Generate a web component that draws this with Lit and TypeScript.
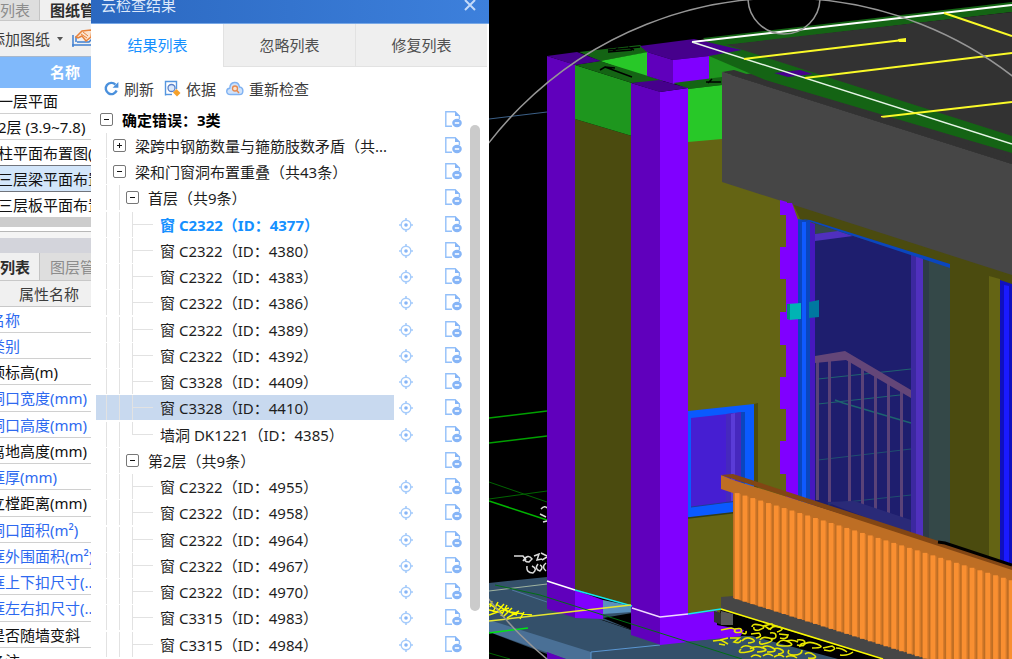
import { LitElement, html, css, svg, nothing } from "lit";
import { customElement, property, state } from "lit/decorators.js";
import { classMap } from "lit/directives/class-map.js";

interface TreeRow {
  level: number;
  text: string;
  open?: boolean;
  leaf?: boolean;
  last?: boolean;
  active?: boolean;
  selected?: boolean;
}

const win = (name: string, id: number, extra: Partial<TreeRow> = {}): TreeRow => ({
  level: 3,
  leaf: true,
  text: `${name}（ID：${id}）`,
  ...extra,
});

const ROWS: TreeRow[] = [
  { level: 0, text: "确定错误：3类", open: true },
  { level: 1, text: "梁跨中钢筋数量与箍筋肢数矛盾（共...", open: false },
  { level: 1, text: "梁和门窗洞布置重叠（共43条）", open: true },
  { level: 2, text: "首层（共9条）", open: true },
  win("窗 C2322", 4377, { active: true }),
  win("窗 C2322", 4380),
  win("窗 C2322", 4383),
  win("窗 C2322", 4386),
  win("窗 C2322", 4389),
  win("窗 C2322", 4392),
  win("窗 C3328", 4409),
  win("窗 C3328", 4410, { selected: true }),
  win("墙洞 DK1221", 4385, { last: true }),
  { level: 2, text: "第2层（共9条）", open: true },
  win("窗 C2322", 4955),
  win("窗 C2322", 4958),
  win("窗 C2322", 4964),
  win("窗 C2322", 4967),
  win("窗 C2322", 4970),
  win("窗 C3315", 4983),
  win("窗 C3315", 4984),
];

const SHEETS = ["一层平面", "2层 (3.9~7.8)", "柱平面布置图(", "三层梁平面布置", "三层板平面布置"];

const PROPS: Array<[string, boolean]> = [
  ["名称", true],
  ["类别", true],
  ["顶标高(m)", false],
  ["洞口宽度(mm)", true],
  ["洞口高度(mm)", true],
  ["离地高度(mm)", false],
  ["框厚(mm)", true],
  ["立樘距离(mm)", false],
  ["洞口面积(m²)", true],
  ["框外围面积(m²)", true],
  ["框上下扣尺寸(...", true],
  ["框左右扣尺寸(...", true],
  ["是否随墙变斜", false],
  ["备注", false],
];

const shared = css`
  :host {
    font-family: "Noto Sans", "Noto Sans CJK SC", sans-serif;
    font-size: 15px;
    line-height: 20px;
    color: #1e1e1e;
  }
  * {
    box-sizing: border-box;
  }
  button {
    font: inherit;
    color: inherit;
    background: none;
    border: 0;
    padding: 0;
    margin: 0;
    white-space: nowrap;
  }
  ul {
    list-style: none;
    margin: 0;
    padding: 0;
  }
  svg {
    display: block;
    flex: none;
  }
`;

@customElement("side-pane")
export class SidePane extends LitElement {
  static styles = [
    shared,
    css`
      :host {
        display: flex;
        flex-direction: column;
        overflow: hidden;
        background: #fff;
        white-space: nowrap;
      }
      .tabs {
        display: flex;
        flex: none;
        height: 28px;
        background: #dedede;
        border-bottom: 1px solid #c8c8c8;
      }
      .tabs.top {
        height: 21px;
        align-items: flex-start;
      }
      .tabs.top button {
        height: 20px;
        padding-bottom: 6px;
      }
      .tabs button {
        flex: none;
        color: #8c8c8c;
        background: #dedede;
      }
      .tabs button:first-child {
        width: 39px;
        padding-right: 10px;
        text-align: right;
      }
      .tabs button:last-child {
        flex: 1 0 auto;
        padding-left: 10px;
        text-align: left;
        border-left: 1px solid #c4c4c4;
      }
      .tabs button.on {
        background: #f0f0f0;
        color: #2d2d2d;
        font-weight: 700;
      }
      .tools {
        display: flex;
        flex: none;
        align-items: center;
        height: 35px;
        margin-left: -10px;
        background: #f0f0f0;
        color: #3c3c3c;
      }
      .caret {
        margin: 0 9px 0 7px;
      }
      .head {
        flex: none;
        height: 32px;
        padding: 5px 0 0 50px;
        background: #80b9fb;
        border-top: 1px solid #a8b8cc;
        color: #fff;
        font-weight: 700;
      }
      .sheets {
        flex: none;
        height: 129px;
        overflow: hidden;
      }
      li {
        height: 26px;
        border-bottom: 1px solid #d0d0d0;
        padding-top: 3px;
        color: #111;
      }
      .sheets li {
        text-indent: -2px;
      }
      .sheets li.on {
        background: #d3e6fa;
        border-bottom-color: #70747c;
        box-shadow: 0 -1px #70747c;
      }
      .hbar {
        flex: none;
        height: 10px;
        background: #cdcdcd;
      }
      .gap {
        flex: none;
        height: 5px;
        border-bottom: 1px solid #b8b8b8;
      }
      .splitter {
        flex: none;
        height: 21px;
        border-top: 6px solid #f4f4f4;
        background: #d3d4db;
      }
      .phead {
        flex: none;
        height: 26px;
        padding: 3px 0 0 19px;
        background: #f0f0f0;
        border-bottom: 1px solid #c8c8c8;
        color: #3c3c3c;
      }
      .props {
        margin-left: -10px;
      }
      .props li:nth-child(4n) {
        height: 27px;
      }
      .props li.link {
        color: #2d69f0;
      }
    `,
  ];

  render() {
    return html`
      <div class="tabs top">
        <button>列表</button><button class="on">图纸管理</button>
      </div>
      <div class="tools">
        <button>添加图纸</button>
        <svg class="caret" width="6" height="4" viewBox="0 0 6 4"><path d="M0 0h6L3 4z" fill="#555" /></svg>
        <svg width="22" height="20" viewBox="0 0 22 20" fill="none">
          <path d="M1 6v12M0 16h21M4 13V8h4" stroke="#3f7fd0" stroke-width="1.5" />
          <path d="M5 13h12l3-3" stroke="#3f7fd0" stroke-width="1.5" />
          <path d="M4 8l6-6 10-1-1 7-5 4-4-5-4 2z" fill="#fbe3cf" stroke="#e8823a" stroke-width="1.5" />
          <path d="M9 5l6 4M11 3l5 4" stroke="#e8823a" />
        </svg>
      </div>
      <div class="head">名称</div>
      <ul class="sheets">
        ${SHEETS.map((s, i) => html`<li class=${classMap({ on: i === 3 })}>${s}</li>`)}
      </ul>
      <div class="hbar"></div>
      <div class="gap"></div>
      <div class="splitter"></div>
      <div class="tabs">
        <button class="on">列表</button><button>图层管理</button>
      </div>
      <div class="phead">属性名称</div>
      <ul class="props">
        ${PROPS.map(([t, link]) => html`<li class=${classMap({ link })}>${t}</li>`)}
      </ul>
    `;
  }
}

@customElement("tree-row")
export class TreeRowElement extends LitElement {
  @property({ attribute: false }) row!: TreeRow;

  static styles = [
    shared,
    css`
      :host {
        display: flex;
        align-items: stretch;
        height: 100%;
      }
      .label {
        display: flex;
        flex: 1;
        min-width: 0;
        height: 25px;
        padding-left: 4px;
        overflow: hidden;
        white-space: nowrap;
      }
      .selected {
        background: #c8d9ef;
      }
      .rail {
        flex: none;
        width: 13px;
        background: linear-gradient(#e2e2e2, #e2e2e2) 6px 0 / 1px 100% no-repeat;
      }
      .node {
        flex: none;
        width: 13px;
        height: 25px;
        display: flex;
        align-items: center;
      }
      .branch {
        flex: none;
        width: 34px;
        background: linear-gradient(#e2e2e2, #e2e2e2) 6px 0 / 1px 100% no-repeat,
          linear-gradient(#e2e2e2, #e2e2e2) 6px 12px / 21px 1px no-repeat;
      }
      .branch.last {
        background: linear-gradient(#e2e2e2, #e2e2e2) 6px 0 / 1px 12px no-repeat,
          linear-gradient(#e2e2e2, #e2e2e2) 6px 12px / 21px 1px no-repeat;
      }
      .text {
        padding: 3px 0 0 9px;
      }
      .branch + .text {
        padding-left: 0;
      }
      .bold {
        font-weight: 700;
        color: #000;
      }
      .active {
        font-weight: 700;
        color: #1590ff;
      }
      .actions {
        display: flex;
        flex: none;
        align-items: center;
        justify-content: space-between;
        width: 68px;
        height: 25px;
        padding-left: 5px;
      }
      .file {
        margin-left: auto;
      }
    `,
  ];

  render() {
    const r = this.row;
    const rails = Array.from({ length: r.leaf ? 2 : r.level });
    return html`
      <div class=${classMap({ label: true, selected: !!r.selected })}>
        ${rails.map(() => html`<span class="rail"></span>`)}
        ${r.leaf
          ? html`<span class=${classMap({ branch: true, last: !!r.last })}></span>`
          : html`<button class="node" aria-label=${r.open ? "收起" : "展开"}>
              <svg width="13" height="13" viewBox="0 0 13 13" fill="none">
                <rect x=".5" y=".5" width="12" height="12" rx="1.5" fill="#fff" stroke="#777" />
                <path d=${r.open ? "M4 6.5h5" : "M4 6.5h5M6.5 4v5"} stroke="#111" />
              </svg>
            </button>`}
        <span class=${classMap({ text: true, bold: r.level === 0, active: !!r.active })}>${r.text}</span>
      </div>
      <div class="actions">
        ${r.leaf
          ? html`<button aria-label="定位">
              <svg width="14" height="14" viewBox="0 0 14 14" fill="none" stroke="#a5cbfb">
                <circle cx="7" cy="7" r="4.8" stroke-width="1.4" />
                <path d="M7 0v3M7 11v3M0 7h3M11 7h3" stroke-width="1.6" />
                <circle cx="7" cy="7" r="1.8" fill="#86b5f7" stroke="none" />
              </svg>
            </button>`
          : nothing}
        <button class="file" aria-label="忽略">
          <svg width="17" height="17" viewBox="0 0 17 17" fill="none">
            <path d="M7 15.300H.8V.8h9.400l4.200 4.200v3" stroke="#93c0fa" stroke-width="1.400" />
            <path d="M10 .5V5h5z" fill="#86b5f7" />
            <ellipse cx="12" cy="12" rx="4.800" ry="4.200" fill="#86b5f7" />
            <path d="M9.800 12h4.400" stroke="#fff" stroke-width="1.600" />
          </svg>
        </button>
      </div>
    `;
  }
}

@customElement("check-panel")
export class CheckPanel extends LitElement {
  @state() private tab = 0;

  static styles = [
    shared,
    css`
      :host {
        display: flex;
        flex-direction: column;
        overflow: hidden;
        background: #fff;
      }
      header {
        display: flex;
        flex: none;
        justify-content: space-between;
        height: 24px;
        padding: 0 13px 0 10px;
        background: linear-gradient(90deg, #2b68c0, #3d80dc);
        border-bottom: 1px solid #78a8e6;
        color: #dce8fa;
        line-height: 10px;
      }
      header button {
        height: 11px;
      }
      nav {
        display: grid;
        flex: none;
        grid-template-columns: 1fr 1fr 1fr;
        height: 43px;
        padding-right: 2px;
      }
      nav button {
        background: #efefef;
        border-left: 1px solid #e2e2e2;
        border-bottom: 1px solid #e2e2e2;
        color: #505050;
      }
      nav button.on {
        background: #fff;
        border-color: #fff;
        color: #1590ff;
      }
      .tools {
        display: flex;
        flex: none;
        gap: 10px;
        height: 40px;
        padding: 3px 0 0 13px;
        color: #3c3c3c;
      }
      .tools button {
        display: flex;
        align-items: center;
        gap: 5px;
      }
      .body {
        display: flex;
        flex: 1;
        min-height: 0;
        padding-left: 5px;
      }
      .tree {
        flex: 1;
        min-width: 0;
      }
      .tree li {
        height: 26px;
      }
      .tree li:nth-child(4n) {
        height: 27px;
      }
      .track {
        flex: none;
        width: 27px;
        padding: 18px 9px 0 8px;
      }
      .thumb {
        height: 91%;
        border-radius: 5px;
        background: #cbcbcb;
      }
    `,
  ];

  render() {
    return html`
      <header>
        <span>云检查结果</span>
        <button aria-label="关闭">
          <svg width="12" height="11" viewBox="0 0 12 11"><path d="M1 0l10 10M11 0L1 10" stroke="#c4dafa" stroke-width="2" /></svg>
        </button>
      </header>
      <nav>
        ${["结果列表", "忽略列表", "修复列表"].map(
          (t, i) =>
            html`<button class=${classMap({ on: i === this.tab })} @click=${() => (this.tab = i)}>${t}</button>`
        )}
      </nav>
      <div class="tools">
        <button>
          <svg width="15" height="15" viewBox="0 0 15 15" fill="none">
            <path d="M12.6 9.5A5.6 5.6 0 1 1 11.4 3.6" stroke="#4a90dc" stroke-width="2.4" />
            <path d="M14.4 1v5.8H8.6z" fill="#4a90dc" />
          </svg>
          刷新
        </button>
        <button>
          <svg width="17" height="17" viewBox="0 0 17 17" fill="none">
            <path d="M1.5 15.5V1.5H12.5V9" stroke="#5596e0" stroke-width="1.4" />
            <path d="M1.5 14.5H8" stroke="#5596e0" stroke-width="1.4" />
            <circle cx="7.5" cy="8" r="3.5" fill="#dbe9fb" stroke="#5a80c8" stroke-width="1.3" />
            <path d="M12.500 9l4 4-3.500 3.500-4-4z" fill="#f5a02a" />
          </svg>
          依据
        </button>
        <button>
          <svg width="18" height="15" viewBox="0 0 18 15" fill="none">
            <path d="M4.5 13.5C-.5 13.5-.3 7.5 3.8 7.2 4 0 12.5-.5 13.5 6c4.5.5 4.5 7.5 0 7.5z" fill="#cfe2fb" stroke="#7fb2f2" stroke-width="1.4" />
            <circle cx="9" cy="7.5" r="2.5" fill="#fbe3cf" stroke="#e58a50" stroke-width="1.3" />
            <path d="M10.8 9.5l2.2 2.5" stroke="#e58a50" stroke-width="1.5" />
          </svg>
          重新检查
        </button>
      </div>
      <div class="body">
        <ul class="tree">
          ${ROWS.map((r) => html`<li><tree-row .row=${r}></tree-row></li>`)}
        </ul>
        <div class="track"><div class="thumb"></div></div>
      </div>
    `;
  }
}

/* Door-side stair balusters: x position and the y range of each bar. */
const BALUSTERS = [
  [816, 360, 500],
  [828, 359, 502],
  [848, 360, 503],
  [861, 367, 507],
  [874, 375, 511],
  [887, 383, 515],
  [900, 390, 519],
];

/* Balcony slats sit on a constant pitch and follow the slope of the handrail. */
const SLATS = Array.from({ length: 36 }, (_, i) => {
  const x = 735.3 + i * 7.83;
  const top = 493 + (x - 735) * 0.318;
  const bottom = 599 + (x - 735) * 0.317;
  return { x, top, bottom };
});

const poly = (points: string, fill: string) => svg`<polygon points=${points} fill=${fill}></polygon>`;
const line = (points: string, stroke: string, width = 1) =>
  svg`<polyline points=${points} fill="none" stroke=${stroke} stroke-width=${width}></polyline>`;

@customElement("model-view")
export class ModelView extends LitElement {
  static styles = css`
    :host {
      display: block;
      overflow: hidden;
      background: #000;
    }
    svg {
      display: block;
      width: 100%;
      height: 100%;
    }
  `;

  private ground() {
    return svg`
      ${line("489,119 547,112", "#3c6088")}
      ${line("489,418 547,411", "#00a000", 1.5)}
      ${line("489,443 547,436", "#00a000", 1.5)}
      ${line("489,482 547,502", "#006400")}
      ${line("489,499 547,491", "#006400")}
      ${line("489,501 547,520", "#00b400", 1.5)}
      <path d="M541 509q4-4 6-1M540 514l6 3M543 522l4-1M514 556h9l3 4M523 561q5-8 9-2l-3 3q-6 0-3-5M534 556l5-2-2 6 5-1M541 553l6 3M542 560l5-3M527 566q-1 7 6 7 5-4-1-7M538 564q-4 5 2 7 4-4 0-6M546 563q-5 4 0 8" fill="none" stroke="#dcdcdc" stroke-width="1.5"></path>
      ${poly("489,583 547,577 547,590 632,612 632,630 603,620 570,618 489,620", "#34506a")}
      ${poly("489,615 590,616 660,640 735,636 820,640 880,659 520,659 489,630", "#34506a")}
      ${poly("603,618 632,613 632,630", "#000")}
      ${poly("489,620 591,652 591,659 566,659 489,632", "#4a7096")}
      ${poly("489,632 547,654 547,659 489,659", "#000")}
      ${poly("547,652 566,659 547,659", "#6000bc")}
      ${line("591,659 591,652 660,645", "#5a96d2")}
      ${line("489,633 528,628", "#00e614", 1.5)}
      ${line("489,653 510,659", "#006400")}
      ${line("489,591 547,584", "#a0b4a0")}
      ${line("512,590 547,602", "#5078a0")}
    `;
  }

  private walls() {
    return svg`
      ${poly("547,56 576,65 576,618 547,609", "#6000bc")}
      ${poly("575,590 603,600 603,619 575,618", "#8000ff")}
      ${poly("603,600 632,606 632,612 603,614", "#5a90be")}
      ${poly("575,119 632,136 632,606 575,590", "#4b4b0f")}
      ${poly("575,65 632,83 632,136 575,119", "#1e961e")}
      ${poly("579,52 640,45 650,52 600,61", "#146414")}
      ${poly("600,61 648,52 648,77 662,83", "#28c828")}
      ${poly("575,65 600,61 664,81 632,83", "#146414")}
      ${poly("547,56 577,52 601,61 575,65", "#46008c")}
      ${poly("703,38 1012,2 1012,12 712,47", "#146414")}
      ${poly("715,46 1012,12 1012,164 722,72", "#323232")}
      ${poly("709,56 742,52 770,72 722,76 722,82 709,82", "#1e961e")}
      ${poly("712,46 724,44 1012,136 1012,153 765,80 709,56", "#146414")}
      ${poly("640,46 694,39 742,50 709,56 673,60 647,52", "#46008c")}
      ${poly("647,52 673,60 673,84 647,76", "#6000bc")}
      ${poly("673,60 709,56 709,80 673,84", "#8000ff")}
      ${poly("673,83 722,77 722,85 688,89", "#146414")}
      ${poly("774,73 800,70 813,74 788,77", "#46008c")}
      ${poly("688,89 722,85 722,140 688,143", "#28c828")}
      ${poly("688,142 722,139 722,180 1012,270 1012,659 688,614", "#646414")}
      ${poly("660,617 717,611 717,625 744,630 740,637 660,644", "#8000ff")}
      ${poly("631,83 661,92 661,645 631,635", "#6000bc")}
      ${poly("660,92 688,88 688,642 660,645", "#8000ff")}
      ${poly("631,83 659,80 688,88 660,92", "#46008c")}
      ${line("692,42 1012,5", "#fff", 2)}
      ${line("692,42 1012,144", "#e6f5e6", 1.5)}
      ${line("744,59 903,40", "#fafa28", 2)}
      ${line("805,78 1012,53", "#fafa28", 2)}
      ${line("881,117 1012,102", "#fafa28", 2)}
      ${line("944,13 1012,36", "#fafa28", 2)}
      ${poly("898,39 906,38 906,42 899,42", "#fafa28")}
      <path d="M608 50l32-3M608 52l24-2M618 48l-5 3M628 47l6 3M600 70l5-3 10 1M605 67l27 10M706 82h15M712 79l-4 4" fill="none" stroke="#000" stroke-width="1.5"></path>
    `;
  }

  private openings() {
    return svg`
      ${poly("792,202 1012,272 1012,570 950,550 950,268 800,219", "#4b4b0f")}
      ${poly("722,72 734,70 1012,159 1012,164", "#323232")}
      ${poly("722,72 1012,164 1012,275 722,182", "#464646")}
      ${poly("989,276 1000,279 1000,570 989,566", "#646414")}
      ${poly("1000,280 1012,284 1012,575 1000,570", "#1010be")}
      ${poly("1004,285 1009,286 1009,575 1004,573", "#1a1aff")}
      <path d="M780 200l7 2v1h5l6 17v285l-12-5v-26h-6v-33h6v-32h-6v-32h6v-32h-6v-33h6v-33h-6v-32h6v-32h-6z" fill="#8000ff"></path>
      ${poly("798,219 810,221 810,508 798,503", "#0a46be")}
      ${poly("802,222 806,222 806,506 802,504", "#0f5aff")}
      ${poly("810,222 815,224 815,510 810,508", "#4618be")}
      ${poly("815,224 911,254 911,535 815,507", "#1e1e6e")}
      ${poly("815,224 842,232 815,234", "#344848")}
      ${poly("815,234 838,231 853,236 815,241", "#5030be")}
      ${poly("911,254 916,256 916,540 911,535", "#3c28a0")}
      ${poly("916,256 923,258 923,540 916,537", "#5030be")}
      ${poly("923,258 950,266 950,548 923,540", "#344848")}
      ${poly("923,258 929,260 929,543 923,540", "#2d3c46")}
      ${poly("802,219 810,220 950,264 950,268", "#0a46be")}
      ${line("818,379 911,369", "#1e646e")}
      ${line("818,404 900,395", "#1e646e")}
      ${line("835,400 843,403 911,423", "#1e646e", 1.5)}
      ${line("818,460 911,449", "#1e506e")}
      ${line("828,504 911,495", "#1e506e")}
      ${BALUSTERS.map(
        ([x, top, bottom]) => svg`<rect x=${x} y=${top} width="3" height=${bottom - top} fill="#5a4278"></rect>`
      )}
      ${poly("826,502 854,501 911,520 911,535", "#2a2a78")}
      ${poly("815,356 845,351 911,390 911,398 846,360 815,363", "#644678")}
      ${poly("787,304 801,303 801,319 789,320", "#00b4b4")}
      ${poly("787,304 790,304 790,320 787,319", "#008c78")}
      ${poly("809,302 819,300 819,317 809,318", "#0078a0")}
      ${poly("688,411 754,404 754,510 688,518", "#0a5aff")}
      ${poly("691,418 745,412 745,500 691,507", "#461ed2")}
      ${poly("726,414 741,412 741,501 726,503", "#4628be")}
      ${poly("731,414 735,413 735,502 731,502", "#5a3cd7")}
      ${poly("741,412 745,412 745,500 741,501", "#0a46be")}
      ${line("691,507 745,500", "#1e3c96")}
      ${line("688,518 740,512", "#323c14", 1.5)}
      ${poly("754,404 758,403 758,490 754,490", "#4b4b0f")}
    `;
  }

  private balcony() {
    return svg`
      ${poly("721,609 735,608 900,659 838,659 744,634 744,627 717,625", "#000")}
      ${poly("688,642 742,636 752,636 800,650 836,659 688,659", "#34506a")}
      ${poly("714,611 722,613 722,625 714,622", "#323232")}
      ${poly("721,597 733,596 940,659 883,659 721,610", "#464646")}
      ${poly("721,611 733,614 733,625 721,625", "#5a5a5a")}
      ${poly("721,475 733,480 1012,567 1012,659 928,659 733,598 733,493 721,489", "#be6e24")}
      ${poly("721,475 733,474 1012,565 1012,570", "#824614")}
      ${SLATS.map(
        ({ x, top, bottom }) => svg`
          <rect x=${x + 4} y=${top + 1} width="1.5" height=${bottom - top} fill="#d67a2a"></rect>
          <rect x=${x - 0.6} y=${top} width="4.8" height=${bottom - top} fill="#f98f31"></rect>`
      )}
      ${line("938,542 945,543 1012,565", "#000", 3)}
    `;
  }

  private annotations() {
    return svg`
      ${line("547,581 575,590", "#fff", 1.5)}
      ${line("575,590 632,606", "#14e6f0", 1.5)}
      ${line("632,608 660,617 688,614", "#f0dcff", 1.5)}
      ${line("688,614 721,609", "#14e6f0", 1.5)}
      ${line("721,609 883,659", "#fafa00", 1.5)}
      ${line("489,621 631,605", "#e6e632", 1.5)}
      ${line("495,585 540,595 742,659", "#006e14")}
      <path d="M489 604l10 6M489 610l14 3M492 601l-2 6M498 602l-5 10M504 604l-8 9M496 604l12 8M507 605l-6 11M512 608l-9 9M503 609l14 6M519 611l-12 7M489 615l20-7M510 612l22 3M524 612l-4 7" fill="none" stroke="#fafa00" stroke-width="1.5"></path>
      <path d="M721 630l10-2q6 1 3 4M735 629q8-2 6 3-8 2-6-3M742 633q5 2 4-2M752 627q0-4 8-2t-1 5q-6 1-5-3M763 626l9-2q3 3-3 5l-4-3M770 630q2-5 9-3t-2 5M713 641l8-1 7 4M720 640l8-2M719 644l6 1M730 638l9 0-5 4q6 2 7-2M742 641q4-5 10-2t-4 4M751 634l8-1q4 4-3 5M760 640q2-4 9-2t-2 5-7-2M770 633q6-1 6 3t-7 2M779 634l9 1q-1 5-8 3M778 643q4-5 11-1t-4 4-7-3M786 641q7-2 12 1M797 640q8-1 8 3t-8 2M803 646q4-6 14-2t-5 4M800 647q-1-4 7-4M741 648q3-4 10-1t-4 5-6-3M750 649q5-4 13-1t-6 4M761 648q6-4 12 0t-6 4M774 649q4-2 8 1t-4 4M789 650q-3 5 5 5t8-5M805 654q4-3 9 1t-6 3M823 648l9-2q6 3-2 5l-6-1M836 648q6 0 11 4M840 655q8 1 13-3M751 657q4-4 10 0M763 656q5-4 10 0M774 657q6-4 10 0M786 657q6-3 11 1" fill="none" stroke="#e6e600" stroke-width="1.6"></path>
      <g fill="none" stroke="#969696" stroke-width="1.5">
        <circle cx="784" cy="371" r="373"></circle>
        <circle cx="784" cy="-2" r="36"></circle>
      </g>
    `;
  }

  render() {
    return html`
      <svg viewBox="489 0 523 659" preserveAspectRatio="xMinYMin slice" role="img" aria-label="三维模型">
        ${this.ground()} ${this.walls()} ${this.openings()} ${this.balcony()} ${this.annotations()}
      </svg>
    `;
  }
}

@customElement("app-root")
export class AppRoot extends LitElement {
  static styles = css`
    :host {
      display: grid;
      grid-template-columns: 91px 398px minmax(0, 1fr);
      grid-template-rows: minmax(0, 1fr);
      height: 100vh;
      overflow: hidden;
    }
  `;

  render() {
    return html`<side-pane></side-pane><check-panel></check-panel><model-view></model-view>`;
  }
}
